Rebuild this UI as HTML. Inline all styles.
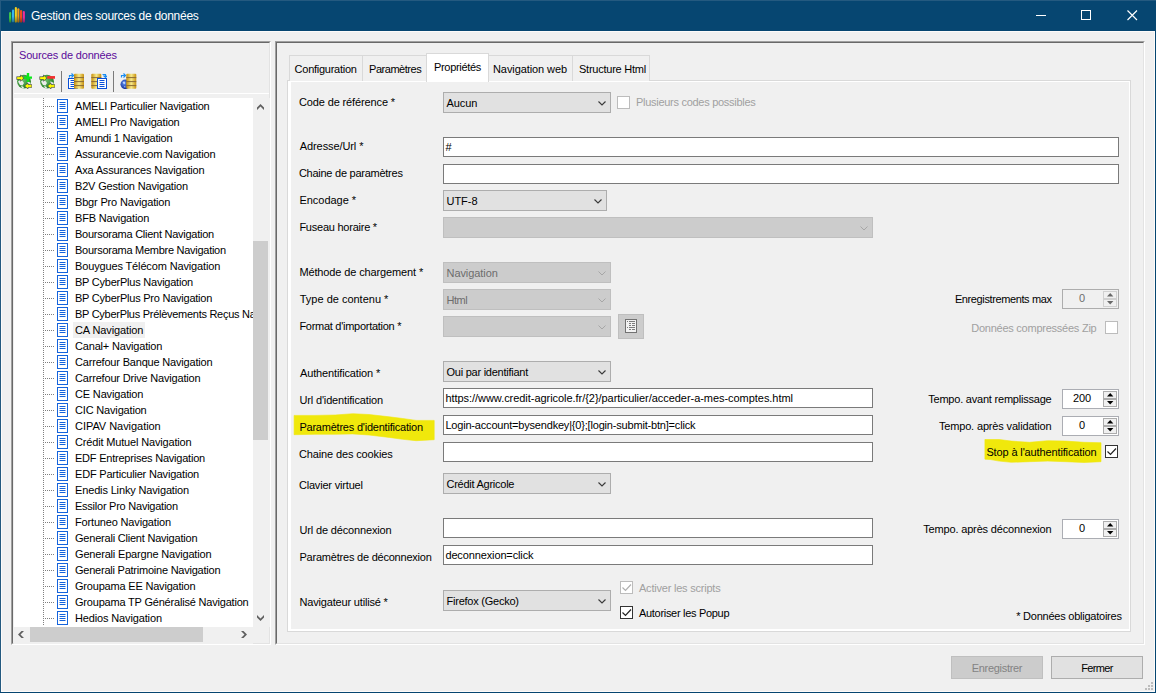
<!DOCTYPE html>
<html lang="fr"><head><meta charset="utf-8"><title>Gestion des sources de données</title>
<style>
*{box-sizing:border-box}
html,body{margin:0;padding:0}
body{width:1156px;height:693px;overflow:hidden;background:#f0f0f0;font:11px "Liberation Sans",sans-serif;color:#000;letter-spacing:-0.2px;position:relative}
.win{position:absolute;left:0;top:0;width:1156px;height:693px;background:#f0f0f0;overflow:hidden}
.win *{position:absolute}
.title{left:0;top:0;width:1156px;height:31px;background:#064671}
.title .t{left:31px;top:9px;color:#fff;font-size:12px;letter-spacing:-0.27px;white-space:nowrap}
.bl{left:0;top:0;width:1px;height:693px;background:#245a80}
.bt{left:0;top:0;width:1156px;height:1px;background:#245a80}
.br{left:1155px;top:0;width:1px;height:693px;background:#064671}
.bb{left:0;top:692px;width:1156px;height:1px;background:#064671}
.sunk{border:1px solid;border-color:#a0a0a0 #fff #fff #a0a0a0}
.sunk>.in{left:0;top:0;right:0;bottom:0;border:1px solid;border-color:#696969 #e3e3e3 #e3e3e3 #696969}
.lbl{white-space:nowrap;line-height:13px;height:13px}
.lbl.r{text-align:right}
.dis{color:#a0a0a0}
.tree{left:14px;top:98px;width:239px;height:529px;background:#fff;overflow:hidden}
.row{left:0;height:16px;width:400px}
.row .hd{left:31px;top:8px;width:10px;height:1px;background-image:linear-gradient(90deg,#808080 50%,transparent 50%);background-size:2px 1px}
.row .doc{left:43px;top:1px}
.row .tx{left:59px;top:0;height:16px;line-height:16px;padding:0 2px;white-space:nowrap}
.row .tx.sel{background:#f0f0f0}
.vd{left:29px;top:0;width:1px;height:527px;background-image:linear-gradient(180deg,#808080 50%,transparent 50%);background-size:1px 2px}
.vsb{left:253px;top:98px;width:17px;height:529px;background:#f0f0f0}
.vsb .th{left:0;top:143px;width:15px;height:199px;background:#cdcdcd}
.hsb{left:14px;top:627px;width:239px;height:17px;background:#f0f0f0}
.hsb .th{left:16px;top:0;width:173px;height:15px;background:#cdcdcd}
.tabc{left:287px;top:80px;width:844px;height:552px;border:1px solid #d9d9d9;background:#fff}
.page{left:291px;top:82px;width:838px;height:547px;background:#f0f0f0}
.tab{top:55px;height:26px;border:1px solid #d9d9d9;border-bottom:none;background:#f0f0f0;line-height:13px;white-space:nowrap}
.tab span{top:7px}
.tab.on{top:53px;height:29px;background:#fff;border-bottom:none}
.tab.on span{top:7px}
.cb{height:21px;border:1px solid #adadad;background:#e1e1e1;line-height:13px;white-space:nowrap}
.cb span{left:2.5px;top:4px}
.cb svg{right:4px;top:8px}
.cb.d{background:#cccccc;border-color:#bfbfbf;color:#6d6d6d}
.tb{height:20px;border:1px solid #7a7a7a;background:#fff;line-height:13px;white-space:nowrap;overflow:hidden}
.tb span{left:1.4px;top:3px}
.sp{width:57px;height:20px;border:1px solid #abadb3;background:#fff;line-height:13px}
.sp span{left:-1px;width:40px;top:2px;text-align:center}
.sp .u,.sp .dn{right:1px;width:14px;height:8px;background:#f0f0f0;border:1px solid #acacac}
.sp.d .u,.sp.d .dn{border-color:#d0d0d0}
.sp.d svg{fill:#686868}
.sp .u{top:1px}.sp .dn{top:9px;height:8px}
.sp.d{background:#f0f0f0;border-color:#adadad;color:#6d6d6d}
.ck{width:13px;height:13px;border:1px solid #333;background:#fff}
.ck.d{border-color:#bcbcbc}
.btn{height:23px;border:1px solid #adadad;background:#e1e1e1;text-align:center;line-height:23px}
.btn.d{background:#cccccc;border-color:#bfbfbf;color:#838383}
</style></head>
<body>
<svg width="0" height="0" style="position:absolute"><defs>
<g id="doc"><rect x=".5" y=".5" width="10" height="13" fill="#fff" stroke="#1463dc"/><path d="M2.5 3.5h6M2.5 5.5h6M2.5 7.5h6M2.5 9.5h6" stroke="#1463dc" fill="none"/></g>
<path id="chev" d="M.5 .5l3.500 3.500l3.500-3.500" fill="none" stroke="#3a3a3a" stroke-width="1.150"/>
<path id="chevd" d="M.5 .5l3.500 3.500l3.500-3.500" fill="none" stroke="#a6a6a6" stroke-width="1"/>
<path id="tick" d="M2.5 6.5l3 3l5.5-6" fill="none" stroke="#222" stroke-width="1.2"/>
<path id="tickd" d="M2.5 6.5l3 3l5.5-6" fill="none" stroke="#b0b0b0" stroke-width="1.2"/>

<linearGradient id="gold" x1="0" x2="1" y1="0" y2="0"><stop offset="0" stop-color="#c8900c"/><stop offset=".5" stop-color="#f6e98a"/><stop offset="1" stop-color="#c8900c"/></linearGradient>
<radialGradient id="glb" cx=".4" cy=".4" r=".7"><stop offset="0" stop-color="#6bbf6b"/><stop offset="1" stop-color="#1e7a1e"/></radialGradient>
<radialGradient id="glbb" cx=".4" cy=".4" r=".7"><stop offset="0" stop-color="#5a8cf0"/><stop offset="1" stop-color="#0a2088"/></radialGradient>
<g id="stack"><rect x="0" y=".5" width="10" height="15" rx="1" fill="url(#gold)"/><path d="M0 4.300h10M0 8.300h10M0 12.300h10" stroke="#8a6a36" stroke-width="1"/></g>
<g id="bdoc"><rect x=".5" y=".5" width="9" height="10" fill="#fff" stroke="#0a50d8" stroke-width="1"/><path d="M2.500 2.500h5M2.500 4.500h5M2.500 6.500h5M2.500 8.500h5" stroke="#0a50d8" stroke-width="1"/></g>
<path id="barr" d="M.5 4.5v-2h3M2.5 .5l2 2l-2 2" fill="none" stroke="#1a8cf0" stroke-width="1.2"/>
<g id="globe"><circle cx="8" cy="8.600" r="6.900" fill="url(#glb)"/><path d="M2 8.500l2.500-1.500l2 1l1.500 2l-1.500 2.500l-2.500-.5zM5 13l2 .5l1.500 2l-2.500-.2zM11 8.500l2.500 .5l1 2l-2 1z" fill="#e9ece9"/></g>
<g id="yarr"><path d="M.700 3.700h3.800v-1.700l3.400 3.100l-3.400 3.100v-1.700h-3.800z" fill="#ffff00" stroke="#1c1c58" stroke-width=".55" stroke-linejoin="round"/></g>
<path id="sau" d="M0 3.500l3.500-3.500l3.500 3.500v2.500l-3.500-3.500l-3.500 3.500z" fill="#606060"/>
<linearGradient id="shade" x1="0" x2="0" y1="0" y2="1"><stop offset="0" stop-color="#000" stop-opacity="0"/><stop offset=".55" stop-color="#000" stop-opacity="0"/><stop offset="1" stop-color="#000" stop-opacity=".38"/></linearGradient>
</defs></svg>
<div class="win">
 <div class="title"><span class="t" style="letter-spacing:-0.262px">Gestion des sources de données</span>
  <svg style="left:8px;top:6px" width="18" height="18" viewBox="8 6 18 18">
   <rect x="9.100" y="12" width="2.100" height="10.400" rx="1" fill="#3fd04a"/><rect x="9.100" y="12" width="2.100" height="10.400" rx="1" fill="url(#shade)"/>
   <rect x="12" y="9.600" width="2.100" height="12.600" rx="1" fill="#35b5f0"/><rect x="12" y="9.600" width="2.100" height="12.600" rx="1" fill="url(#shade)"/>
   <rect x="14.800" y="7" width="2.100" height="15.400" rx="1" fill="#f2d21c"/><rect x="14.800" y="7" width="2.100" height="15.400" rx="1" fill="url(#shade)"/>
   <rect x="17.300" y="8.300" width="2.100" height="14.100" rx="1" fill="#f59a18"/><rect x="17.300" y="8.300" width="2.100" height="14.100" rx="1" fill="url(#shade)"/>
   <rect x="20" y="10.100" width="2.200" height="12.300" rx="1" fill="#f0501c"/><rect x="20" y="10.100" width="2.200" height="12.300" rx="1" fill="url(#shade)"/>
   <rect x="22.800" y="10.900" width="2.100" height="11.500" rx="1" fill="#f02c9a"/><rect x="22.800" y="10.900" width="2.100" height="11.500" rx="1" fill="url(#shade)"/>
  </svg>
  <svg style="left:1030px;top:5px" width="116" height="20" viewBox="1030 5 116 20" fill="none" stroke="#fff" stroke-width="1">
   <path d="M1036 15.500h10"/>
   <rect x="1081.500" y="10.500" width="9" height="9"/>
   <path d="M1127.500 10.500l9.500 9.500M1137 10.500l-9.500 9.500" stroke-width="1.150"/>
  </svg>
 </div>
 <div class="sunk" style="left:11px;top:41px;width:260px;height:604px"><div class="in"></div></div>
 <div class="lbl" style="left:19px;top:49px;color:#5a0a9a;letter-spacing:-0.175px">Sources de données</div>
 <div style="left:14px;top:93px;width:255px;height:1px;background:#fff"></div>
 <svg style="left:16px;top:73px" width="16" height="16"><use href="#globe"/><use href="#yarr"/><use href="#yarr" transform="translate(16.500 18.100) rotate(180)"/><path d="M12 0v9.100M8 4.600h8.200" stroke="#0be81a" stroke-width="2.400"/></svg>
 <svg style="left:39px;top:73px" width="16" height="16"><use href="#globe"/><use href="#yarr"/><use href="#yarr" transform="translate(16.500 18.100) rotate(180)"/><path d="M8.200 4.400h8" stroke="#f23030" stroke-width="2.700"/></svg>
 <div style="left:61px;top:71px;width:1px;height:21px;background:#7a7a7a"></div>
 <svg style="left:68px;top:73px" width="16" height="16"><use href="#bdoc" x="0" y="5"/><use href="#stack" x="6" y=".3"/><use href="#barr" x="1"/></svg>
 <svg style="left:91px;top:73px" width="16" height="16"><use href="#stack" x=".3" y=".3"/><use href="#bdoc" x="6" y="5"/><path d="M11.500 1.500h3v2M12.500 2.500l2 2l2-2" fill="none" stroke="#1a8cf0" stroke-width="1.200"/></svg>
 <div style="left:113px;top:71px;width:1px;height:21px;background:#7a7a7a"></div>
 <svg style="left:120px;top:73px" width="17" height="16"><circle cx="5.300" cy="11.300" r="4.800" fill="url(#glbb)"/><path d="M2.500 9l2-.5l1 1.500l-1.500 1.500zM4 13l1.500 .5l-.5 1.500z" fill="#bcd4ff"/><use href="#stack" x="6.300" y=".3"/><use href="#barr" x="1"/></svg>
 <div class="tree"><div class="vd"></div>
<div class="row" style="top:0px"><i class="hd"></i><svg class="doc" width="11" height="14" viewBox="0 0 11 14"><use href="#doc"/></svg><span class="tx" style="letter-spacing:-0.197px">AMELI Particulier Navigation</span></div>
<div class="row" style="top:16px"><i class="hd"></i><svg class="doc" width="11" height="14" viewBox="0 0 11 14"><use href="#doc"/></svg><span class="tx" style="letter-spacing:-0.185px">AMELI Pro Navigation</span></div>
<div class="row" style="top:32px"><i class="hd"></i><svg class="doc" width="11" height="14" viewBox="0 0 11 14"><use href="#doc"/></svg><span class="tx" style="letter-spacing:-0.218px">Amundi 1 Navigation</span></div>
<div class="row" style="top:48px"><i class="hd"></i><svg class="doc" width="11" height="14" viewBox="0 0 11 14"><use href="#doc"/></svg><span class="tx" style="letter-spacing:-0.165px">Assurancevie.com Navigation</span></div>
<div class="row" style="top:64px"><i class="hd"></i><svg class="doc" width="11" height="14" viewBox="0 0 11 14"><use href="#doc"/></svg><span class="tx" style="letter-spacing:-0.179px">Axa Assurances Navigation</span></div>
<div class="row" style="top:80px"><i class="hd"></i><svg class="doc" width="11" height="14" viewBox="0 0 11 14"><use href="#doc"/></svg><span class="tx" style="letter-spacing:-0.177px">B2V Gestion Navigation</span></div>
<div class="row" style="top:96px"><i class="hd"></i><svg class="doc" width="11" height="14" viewBox="0 0 11 14"><use href="#doc"/></svg><span class="tx" style="letter-spacing:-0.17px">Bbgr Pro Navigation</span></div>
<div class="row" style="top:112px"><i class="hd"></i><svg class="doc" width="11" height="14" viewBox="0 0 11 14"><use href="#doc"/></svg><span class="tx" style="letter-spacing:-0.166px">BFB Navigation</span></div>
<div class="row" style="top:128px"><i class="hd"></i><svg class="doc" width="11" height="14" viewBox="0 0 11 14"><use href="#doc"/></svg><span class="tx" style="letter-spacing:-0.257px">Boursorama Client Navigation</span></div>
<div class="row" style="top:144px"><i class="hd"></i><svg class="doc" width="11" height="14" viewBox="0 0 11 14"><use href="#doc"/></svg><span class="tx" style="letter-spacing:-0.269px">Boursorama Membre Navigation</span></div>
<div class="row" style="top:160px"><i class="hd"></i><svg class="doc" width="11" height="14" viewBox="0 0 11 14"><use href="#doc"/></svg><span class="tx" style="letter-spacing:-0.139px">Bouygues Télécom Navigation</span></div>
<div class="row" style="top:176px"><i class="hd"></i><svg class="doc" width="11" height="14" viewBox="0 0 11 14"><use href="#doc"/></svg><span class="tx" style="letter-spacing:-0.234px">BP CyberPlus Navigation</span></div>
<div class="row" style="top:192px"><i class="hd"></i><svg class="doc" width="11" height="14" viewBox="0 0 11 14"><use href="#doc"/></svg><span class="tx" style="letter-spacing:-0.237px">BP CyberPlus Pro Navigation</span></div>
<div class="row" style="top:208px"><i class="hd"></i><svg class="doc" width="11" height="14" viewBox="0 0 11 14"><use href="#doc"/></svg><span class="tx" style="letter-spacing:-0.278px">BP CyberPlus Prélèvements Reçus Navigation</span></div>
<div class="row" style="top:224px"><i class="hd"></i><svg class="doc" width="11" height="14" viewBox="0 0 11 14"><use href="#doc"/></svg><span class="tx sel" style="letter-spacing:-0.105px">CA Navigation</span></div>
<div class="row" style="top:240px"><i class="hd"></i><svg class="doc" width="11" height="14" viewBox="0 0 11 14"><use href="#doc"/></svg><span class="tx" style="letter-spacing:-0.179px">Canal+ Navigation</span></div>
<div class="row" style="top:256px"><i class="hd"></i><svg class="doc" width="11" height="14" viewBox="0 0 11 14"><use href="#doc"/></svg><span class="tx" style="letter-spacing:-0.188px">Carrefour Banque Navigation</span></div>
<div class="row" style="top:272px"><i class="hd"></i><svg class="doc" width="11" height="14" viewBox="0 0 11 14"><use href="#doc"/></svg><span class="tx" style="letter-spacing:-0.182px">Carrefour Drive Navigation</span></div>
<div class="row" style="top:288px"><i class="hd"></i><svg class="doc" width="11" height="14" viewBox="0 0 11 14"><use href="#doc"/></svg><span class="tx" style="letter-spacing:-0.157px">CE Navigation</span></div>
<div class="row" style="top:304px"><i class="hd"></i><svg class="doc" width="11" height="14" viewBox="0 0 11 14"><use href="#doc"/></svg><span class="tx" style="letter-spacing:-0.172px">CIC Navigation</span></div>
<div class="row" style="top:320px"><i class="hd"></i><svg class="doc" width="11" height="14" viewBox="0 0 11 14"><use href="#doc"/></svg><span class="tx" style="letter-spacing:-0.045px">CIPAV Navigation</span></div>
<div class="row" style="top:336px"><i class="hd"></i><svg class="doc" width="11" height="14" viewBox="0 0 11 14"><use href="#doc"/></svg><span class="tx" style="letter-spacing:-0.164px">Crédit Mutuel Navigation</span></div>
<div class="row" style="top:352px"><i class="hd"></i><svg class="doc" width="11" height="14" viewBox="0 0 11 14"><use href="#doc"/></svg><span class="tx" style="letter-spacing:-0.221px">EDF Entreprises Navigation</span></div>
<div class="row" style="top:368px"><i class="hd"></i><svg class="doc" width="11" height="14" viewBox="0 0 11 14"><use href="#doc"/></svg><span class="tx" style="letter-spacing:-0.192px">EDF Particulier Navigation</span></div>
<div class="row" style="top:384px"><i class="hd"></i><svg class="doc" width="11" height="14" viewBox="0 0 11 14"><use href="#doc"/></svg><span class="tx" style="letter-spacing:-0.148px">Enedis Linky Navigation</span></div>
<div class="row" style="top:400px"><i class="hd"></i><svg class="doc" width="11" height="14" viewBox="0 0 11 14"><use href="#doc"/></svg><span class="tx" style="letter-spacing:-0.244px">Essilor Pro Navigation</span></div>
<div class="row" style="top:416px"><i class="hd"></i><svg class="doc" width="11" height="14" viewBox="0 0 11 14"><use href="#doc"/></svg><span class="tx" style="letter-spacing:-0.168px">Fortuneo Navigation</span></div>
<div class="row" style="top:432px"><i class="hd"></i><svg class="doc" width="11" height="14" viewBox="0 0 11 14"><use href="#doc"/></svg><span class="tx" style="letter-spacing:-0.211px">Generali Client Navigation</span></div>
<div class="row" style="top:448px"><i class="hd"></i><svg class="doc" width="11" height="14" viewBox="0 0 11 14"><use href="#doc"/></svg><span class="tx" style="letter-spacing:-0.181px">Generali Epargne Navigation</span></div>
<div class="row" style="top:464px"><i class="hd"></i><svg class="doc" width="11" height="14" viewBox="0 0 11 14"><use href="#doc"/></svg><span class="tx" style="letter-spacing:-0.231px">Generali Patrimoine Navigation</span></div>
<div class="row" style="top:480px"><i class="hd"></i><svg class="doc" width="11" height="14" viewBox="0 0 11 14"><use href="#doc"/></svg><span class="tx" style="letter-spacing:-0.195px">Groupama EE Navigation</span></div>
<div class="row" style="top:496px"><i class="hd"></i><svg class="doc" width="11" height="14" viewBox="0 0 11 14"><use href="#doc"/></svg><span class="tx" style="letter-spacing:-0.196px">Groupama TP Généralisé Navigation</span></div>
<div class="row" style="top:512px"><i class="hd"></i><svg class="doc" width="11" height="14" viewBox="0 0 11 14"><use href="#doc"/></svg><span class="tx" style="letter-spacing:-0.141px">Hedios Navigation</span></div>
 </div>
 <div class="vsb"><div class="th"></div>
  <svg style="left:4px;top:6px" width="7" height="6"><use href="#sau"/></svg>
  <svg style="left:4px;top:517px" width="7" height="6"><use href="#sau" transform="translate(0 6) scale(1 -1)"/></svg>
 </div>
 <div class="hsb"><div class="th"></div>
  <svg style="left:4px;top:4px" width="6" height="7"><use href="#sau" transform="translate(0 7) rotate(-90)"/></svg>
  <svg style="left:227px;top:4px" width="6" height="7"><use href="#sau" transform="translate(6 0) rotate(90)"/></svg>
 </div>
 <div class="sunk" style="left:275px;top:41px;width:870px;height:604px"><div class="in"></div></div>

 <div class="tabc"></div>
 <div class="page"></div>
 <div class="tab" style="left:289px;width:74px"><span style="left:4.600px;letter-spacing:-0.257px">Configuration</span></div>
 <div class="tab" style="left:362px;width:65px"><span style="left:6px;letter-spacing:-0.46px">Paramètres</span></div>
 <div class="tab" style="left:488px;width:85px"><span style="left:4px;letter-spacing:-0.085px">Navigation web</span></div>
 <div class="tab" style="left:572px;width:78px"><span style="left:6px;letter-spacing:-0.239px">Structure Html</span></div>
 <div class="tab on" style="left:426px;width:63px"><span style="left:7px;letter-spacing:-0.322px">Propriétés</span></div>

 <!-- highlights -->
 <svg style="left:290px;top:410px" width="150" height="35" viewBox="290 410 150 35"><path d="M294.100 415.400L315 415.400L335.200 415L352.800 413.700L369 414.500L389.200 416.800L402.700 418.500L416.200 420.400L434.200 420.400L434.200 439.700L416.200 440.700L402.700 439.300L389.200 437.400L369 435L352.800 433.900L335.200 434.300L315 434.300L294.100 434.700Z" fill="#f0e80c" stroke="#f0e80c" stroke-width=".6" stroke-linejoin="round"/></svg>
 <svg style="left:980px;top:435px" width="125" height="32" viewBox="980 435 125 32"><path d="M984.900 439.500L999.200 439.500L1011.300 441.100L1029.500 442.300L1047.700 440.700L1065.800 441.100L1084 442.300L1101 442.700L1101 461.700L1084 462.500L1065.800 461.700L1047.700 461.100L1029.500 461.700L1011.300 462.300L999.200 461.100L990.700 459.600L984.900 459.200Z" fill="#f0e80c" stroke="#f0e80c" stroke-width=".6" stroke-linejoin="round"/></svg>

 <!-- labels -->
 <div class="lbl" style="left:298.92px;top:96px;letter-spacing:-0.125px">Code de référence *</div>
 <div class="lbl" style="left:299.78px;top:140px;letter-spacing:-0.092px">Adresse/Url *</div>
 <div class="lbl" style="left:298.92px;top:167px;letter-spacing:-0.256px">Chaine de paramètres</div>
 <div class="lbl" style="left:299.39px;top:194px;letter-spacing:-0.014px">Encodage *</div>
 <div class="lbl" style="left:299.39px;top:221px;letter-spacing:-0.237px">Fuseau horaire *</div>
 <div class="lbl" style="left:299.39px;top:266px;letter-spacing:-0.123px">Méthode de chargement *</div>
 <div class="lbl" style="left:299.78px;top:293px;letter-spacing:-0.007px">Type de contenu *</div>
 <div class="lbl" style="left:299.39px;top:320px;letter-spacing:-0.272px">Format d'importation *</div>
 <div class="lbl" style="left:299.98px;top:367px;letter-spacing:-0.135px">Authentification *</div>
 <div class="lbl" style="left:299.43px;top:394px;letter-spacing:-0.152px">Url d'identification</div>
 <div class="lbl" style="left:299.39px;top:421px;letter-spacing:-0.217px">Paramètres d'identification</div>
 <div class="lbl" style="left:298.92px;top:448px;letter-spacing:-0.129px">Chaine des cookies</div>
 <div class="lbl" style="left:298.92px;top:479px;letter-spacing:-0.185px">Clavier virtuel</div>
 <div class="lbl" style="left:299.53px;top:524px;letter-spacing:-0.156px">Url de déconnexion</div>
 <div class="lbl" style="left:299.49px;top:551px;letter-spacing:-0.218px">Paramètres de déconnexion</div>
 <div class="lbl" style="left:299.49px;top:596px;letter-spacing:-0.175px">Navigateur utilisé *</div>

 <!-- controls -->
 <div class="cb" style="left:443px;top:92px;width:168px"><span style="letter-spacing:-0.052px">Aucun</span><svg width="8" height="5"><use href="#chev"/></svg></div>
 <div class="ck d" style="left:617px;top:96px"></div>
 <div class="lbl dis" style="left:636px;top:96px;letter-spacing:-0.285px">Plusieurs codes possibles</div>
 <div class="tb" style="left:443px;top:137px;width:676px"><span>#</span></div>
 <div class="tb" style="left:443px;top:164px;width:676px"></div>
 <div class="cb" style="left:443px;top:190px;width:164px"><span style="letter-spacing:-0.035px">UTF-8</span><svg width="8" height="5"><use href="#chev"/></svg></div>
 <div class="cb d" style="left:443px;top:217px;width:430px"><svg width="8" height="5"><use href="#chevd"/></svg></div>
 <div class="cb d" style="left:443px;top:262px;width:168px"><span style="letter-spacing:-0.068px">Navigation</span><svg width="8" height="5"><use href="#chevd"/></svg></div>
 <div class="cb d" style="left:443px;top:289px;width:168px"><span style="letter-spacing:-0.488px">Html</span><svg width="8" height="5"><use href="#chevd"/></svg></div>
 <div class="cb d" style="left:443px;top:316px;width:168px"><svg width="8" height="5"><use href="#chevd"/></svg></div>
 <div class="btn d" style="left:618px;top:314px;width:26px;height:25px"><svg style="left:6px;top:4px" width="12" height="14" viewBox="0 0 12 14"><rect x=".5" y=".5" width="11" height="13" fill="#f2f2f2" stroke="#727272"/><path d="M2 2.500h1M4 2.500h6M4 4.500h2M7 4.500h3M4 6.500h2M7 6.500h3M2 8.500h1M4 8.500h6M4 10.500h2M7 10.500h3" stroke="#7c7c7c" fill="none"/></svg></div>
 <div class="cb" style="left:443px;top:361px;width:168px"><span style="letter-spacing:-0.25px">Oui par identifiant</span><svg width="8" height="5"><use href="#chev"/></svg></div>
 <div class="tb" style="left:443px;top:388px;width:430px"><span style="letter-spacing:-0.046px">https://www.credit-agricole.fr/{2}/particulier/acceder-a-mes-comptes.html</span></div>
 <div class="tb" style="left:443px;top:415px;width:430px"><span style="letter-spacing:-0.188px">Login-account=bysendkey|{0};[login-submit-btn]=click</span></div>
 <div class="tb" style="left:443px;top:442px;width:430px"></div>
 <div class="cb" style="left:443px;top:473px;width:168px"><span style="letter-spacing:-0.256px">Crédit Agricole</span><svg width="8" height="5"><use href="#chev"/></svg></div>
 <div class="tb" style="left:443px;top:518px;width:430px"></div>
 <div class="tb" style="left:443px;top:545px;width:430px"><span style="letter-spacing:-0.128px">deconnexion=click</span></div>
 <div class="cb" style="left:443px;top:590px;width:168px"><span style="letter-spacing:-0.233px">Firefox (Gecko)</span><svg width="8" height="5"><use href="#chev"/></svg></div>
 <div class="ck d" style="left:620px;top:581px"><svg style="left:-1px;top:-1px" width="13" height="13"><use href="#tickd"/></svg></div>
 <div class="lbl dis" style="left:639px;top:582px;letter-spacing:-0.217px">Activer les scripts</div>
 <div class="ck" style="left:620px;top:606px"><svg style="left:-1px;top:-1px" width="13" height="13"><use href="#tick"/></svg></div>
 <div class="lbl" style="left:639px;top:607px;letter-spacing:-0.305px">Autoriser les Popup</div>

 <!-- right column -->
 <div class="lbl r" style="left:900px;width:151.500px;top:293px;letter-spacing:-0.386px">Enregistrements max</div>
 <div class="sp d" style="left:1062px;top:289px"><span>0</span><i class="u"><svg width="7" height="4" style="left:2.500px;top:.8px"><path d="M0 3.400l3.200-3.400l3.200 3.400z"/></svg></i><i class="dn"><svg width="7" height="4" style="left:2.500px;top:1px"><path d="M0 0l3.200 3.400l3.200-3.400z"/></svg></i></div>
 <div class="lbl r dis" style="left:900px;width:196.500px;top:322px;letter-spacing:-0.24px">Données compressées Zip</div>
 <div class="ck d" style="left:1105px;top:321px"></div>
 <div class="lbl r" style="left:900px;width:151.500px;top:393px;letter-spacing:-0.214px">Tempo. avant remplissage</div>
 <div class="sp" style="left:1062px;top:389px"><span>200</span><i class="u"><svg width="7" height="4" style="left:2.500px;top:.8px"><path d="M0 3.400l3.200-3.400l3.200 3.400z"/></svg></i><i class="dn"><svg width="7" height="4" style="left:2.500px;top:1px"><path d="M0 0l3.200 3.400l3.200-3.400z"/></svg></i></div>
 <div class="lbl r" style="left:900px;width:151.500px;top:420px;letter-spacing:-0.155px">Tempo. après validation</div>
 <div class="sp" style="left:1062px;top:416px"><span>0</span><i class="u"><svg width="7" height="4" style="left:2.500px;top:.8px"><path d="M0 3.400l3.200-3.400l3.200 3.400z"/></svg></i><i class="dn"><svg width="7" height="4" style="left:2.500px;top:1px"><path d="M0 0l3.200 3.400l3.200-3.400z"/></svg></i></div>
 <div class="lbl r" style="left:900px;width:196.500px;top:446px;letter-spacing:-0.132px">Stop à l'authentification</div>
 <div class="ck" style="left:1105px;top:445px"><svg style="left:-1px;top:-1px" width="13" height="13"><use href="#tick"/></svg></div>
 <div class="lbl r" style="left:900px;width:151.500px;top:523px;letter-spacing:-0.157px">Tempo. après déconnexion</div>
 <div class="sp" style="left:1062px;top:519px"><span>0</span><i class="u"><svg width="7" height="4" style="left:2.500px;top:.8px"><path d="M0 3.400l3.200-3.400l3.200 3.400z"/></svg></i><i class="dn"><svg width="7" height="4" style="left:2.500px;top:1px"><path d="M0 0l3.200 3.400l3.200-3.400z"/></svg></i></div>
 <div class="lbl r" style="left:900px;width:221.700px;top:610px;letter-spacing:-0.239px">* Données obligatoires</div>

 <div class="btn d" style="left:951px;top:656px;width:92px;letter-spacing:-0.307px">Enregistrer</div>
 <div class="btn" style="left:1051px;top:656px;width:92px;letter-spacing:-0.616px">Fermer</div>

 <svg style="left:1143px;top:681px" width="12" height="11" fill="#bdbdbd"><rect x="8" y="1" width="2" height="2"/><rect x="5" y="4" width="2" height="2"/><rect x="8" y="4" width="2" height="2"/><rect x="2" y="7" width="2" height="2"/><rect x="5" y="7" width="2" height="2"/><rect x="8" y="7" width="2" height="2"/></svg>
 <div style="left:1px;top:31px;width:1154px;height:661px;border:1px solid #fdfbfa;pointer-events:none"></div>
 <div class="bl"></div><div class="br"></div><div class="bb"></div><div class="bt"></div>
</div>

</body></html>
